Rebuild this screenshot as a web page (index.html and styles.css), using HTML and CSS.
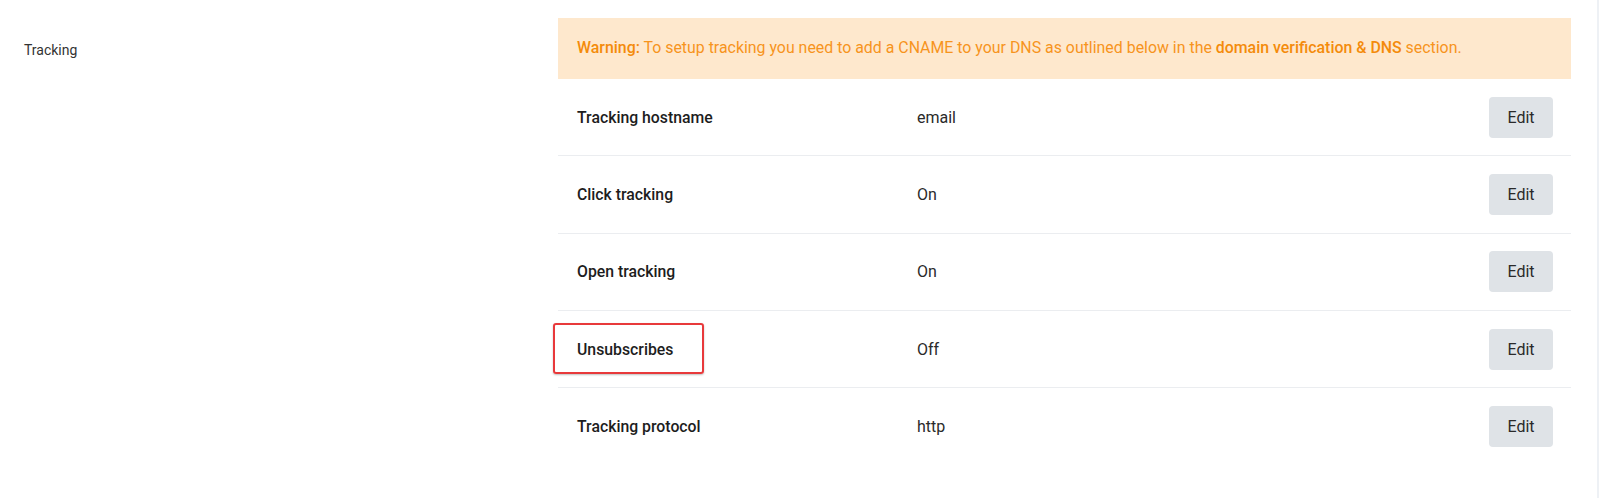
FILE: index.html
```html
<!DOCTYPE html>
<html>
<head>
<meta charset="utf-8">
<link rel="stylesheet" href="styles.css">
</head>
<body>
<div class="page">
  <div class="side">
    <div class="side-label">Tracking</div>
  </div>
  <div class="main">
    <div class="warning"><strong>Warning:</strong> To setup tracking you need to add a CNAME to your DNS as outlined below in the <strong>domain verification &amp; DNS</strong> section.</div>
    <div class="row">
      <div class="label">Tracking hostname</div>
      <div class="value">email</div>
      <button class="edit">Edit</button>
    </div>
    <div class="row">
      <div class="label">Click tracking</div>
      <div class="value">On</div>
      <button class="edit">Edit</button>
    </div>
    <div class="row">
      <div class="label">Open tracking</div>
      <div class="value">On</div>
      <button class="edit">Edit</button>
    </div>
    <div class="row">
      <div class="label highlighted">Unsubscribes<span class="highlight"></span></div>
      <div class="value">Off</div>
      <button class="edit">Edit</button>
    </div>
    <div class="row last">
      <div class="label">Tracking protocol</div>
      <div class="value">http</div>
      <button class="edit">Edit</button>
    </div>
  </div>
  <div class="edge"></div>
</div>
</body>
</html>
```
FILE: styles.css
```css
html, body {
  margin: 0;
  padding: 0;
  background: #ffffff;
}
body {
  font-family: Roboto, "Liberation Sans", sans-serif;
  color: #222;
}
.page {
  display: flex;
  height: 498px;
}
.side {
  width: 558px;
  flex: none;
  padding: 42px 0 0 24px;
  box-sizing: border-box;
}
.side-label {
  font-size: 14px;
  line-height: 17px;
  color: #333;
}
.main {
  width: 1013px;
  flex: none;
  padding-top: 18px;
}
.warning {
  height: 61px;
  box-sizing: border-box;
  background: #fee8cd;
  color: #f7941d;
  font-size: 15.9px;
  line-height: 18px;
  padding: 21px 19px 0;
}
.warning strong {
  font-weight: 500;
  color: #f48b0b;
}
.row {
  display: flex;
  align-items: center;
  height: 77.3px;
  box-sizing: border-box;
  border-bottom: 1px solid #ebedf0;
  padding: 0 18px 0 19px;
}
.row.last {
  border-bottom: none;
}
.label {
  width: 340px;
  font-size: 15.8px;
  font-weight: 500;
  color: #1d1d1d;
}
.highlighted {
  position: relative;
}
.highlight {
  position: absolute;
  left: -24px;
  top: -17px;
  width: 147px;
  height: 47px;
  border: 2px solid #e8393b;
  border-radius: 3px;
  box-shadow: 0 1px 2px rgba(0,0,0,0.25);
}
.value {
  flex: 1;
  font-size: 16px;
  color: #2a2a2a;
}
.edit {
  width: 64px;
  height: 41px;
  border: none;
  border-radius: 4px;
  background: #dfe3e7;
  font-family: Roboto, "Liberation Sans", sans-serif;
  font-size: 16px;
  color: #2a2a2a;
  padding: 0;
}
.edge {
  margin-left: 26px;
  width: 2px;
  background: #eef1f5;
}
```
